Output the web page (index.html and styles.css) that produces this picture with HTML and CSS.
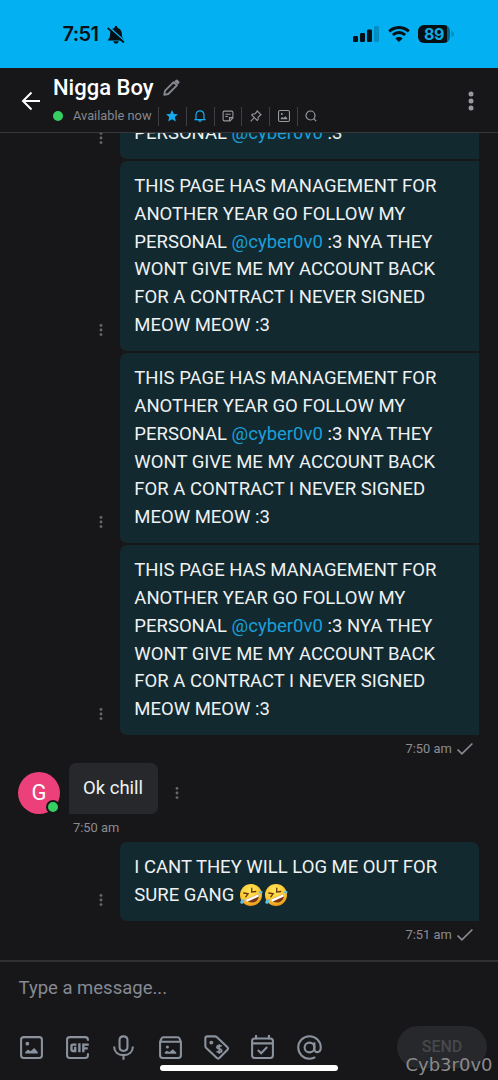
FILE: index.html
```html
<!DOCTYPE html>
<html lang="en">
<head>
<meta charset="utf-8">
<title>Chat</title>
<link rel="stylesheet" href="styles.css">
</head>
<body>
<svg class="defs" aria-hidden="true">
  <symbol id="dots" viewBox="0 0 6 14"><circle cx="3" cy="2.4" r="1.450"/><circle cx="3" cy="7" r="1.450"/><circle cx="3" cy="11.600" r="1.450"/></symbol>
  <symbol id="check" viewBox="0 0 18 14"><path d="M1.500 7.500l4.400 4.400L16.400 1.500" fill="none" stroke="currentColor" stroke-width="1.700"/></symbol>
  <symbol id="picture" viewBox="0 0 24 24"><rect x="2" y="2" width="20" height="20" rx="2.600" fill="none" stroke="currentColor" stroke-width="2"/><circle cx="8" cy="8.300" r="1.800"/><path d="M6 17.800v-1.500l2.600-2.300 2.500 1.700 3.500-3.300 3.400 3.900v1.500z"/></symbol>
  <radialGradient id="face" cx=".45" cy=".3" r=".75"><stop offset="0" stop-color="#ffe75a"/><stop offset=".65" stop-color="#fdc62e"/><stop offset="1" stop-color="#e28a16"/></radialGradient>
  <symbol id="rofl" viewBox="0 0 24 24">
    <circle cx="12" cy="12" r="11" fill="url(#face)"/>
    <path d="M6.600 16.800L19.600 11c1 3.300-.6 6.600-3.600 7.900-3.500 1.500-7.400.5-9.400-2.100z" fill="#7a3512"/>
    <path d="M6.600 16.800L19.600 11l.2 2.400-11.600 5.400z" fill="#fff"/>
    <path d="M4.800 10l4.300.8-2.300 3M12.800 5.200l-.2 3.900 4.100-.6" fill="none" stroke="#67320f" stroke-width="1.300" stroke-linecap="round"/>
    <path d="M5.900 16.400c-2.300-.4-4.700.9-4.600 2.800.1 2 2.700 2 3.500.5.500-1 .3-2.100 1.100-3.300zM19.300 9.800c.8-1.700 3.600-2.300 4.200-1 .5 1.300-1.100 2.300-4.200 1z" fill="#62bfe6"/>
  </symbol>
</svg>
<div class="screen">
  <div class="statusbar">
    <div class="clock">
      <span class="clock-time">7:51</span>
      <svg class="muted" viewBox="0 0 18 19"><path d="M.8 15.500c0-1.500 2.200-2 2.200-5.500 0-3.900 1.600-6.300 4.400-7C7.600 1.700 8.100.7 9 .7s1.400 1 1.600 2.300c2.800.7 4.400 3.100 4.400 7 0 3.500 2.200 4 2.200 5.500zM6.300 16.300h5.400c-.3 1.500-1.400 2.300-2.700 2.300s-2.400-.8-2.700-2.300z"/><path d="M1.500 1.600l16 14.400" stroke="#03b0f2" stroke-width="1.500"/><path d="M.6 2.800l16.300 14.700" stroke="#061015" stroke-width="1.700"/></svg>
    </div>
    <div class="signals">
      <svg class="cell" viewBox="0 0 26 16"><rect x="0" y="10" width="5" height="6" rx="1.300"/><rect x="7" y="7" width="5" height="9" rx="1.300"/><rect x="14" y="3.500" width="5" height="12.500" rx="1.300"/><rect x="21" y="0" width="5" height="16" rx="1.300" opacity=".22"/></svg>
      <svg class="wifi" viewBox="0 0 22 16"><path d="M1.200 5.400C6.700.1 15.300.1 20.800 5.400M4.900 9c3.400-3.300 8.800-3.300 12.200 0" fill="none" stroke="#061015" stroke-width="2.900"/><path d="M11 16l-3.600-3.500c2-1.900 5.200-1.900 7.200 0z"/></svg>
      <div class="battery"><span class="battery-level">89</span><i class="battery-tip"></i></div>
    </div>
  </div>
  <header class="header">
    <svg class="back" viewBox="0 0 20 20"><path d="M19 10H2M10.500 1.500L2 10l8.500 8.500" fill="none" stroke="#fff" stroke-width="2"/></svg>
    <div class="contact">
      <div class="name-row">
        <h1 class="name">Nigga Boy</h1>
        <svg class="pencil" viewBox="0 0 17 17"><path d="M1.200 15.800l.9-4.100L10.600 3.100l3.300 3.300L5.300 15z" fill="none" stroke="currentColor" stroke-width="1.800" stroke-linejoin="round"/><path d="M11.300 2.400L12.700 1c.7-.7 1.400-.7 2.100 0l1.200 1.200c.7.700.7 1.400 0 2.100l-1.400 1.400z"/></svg>
      </div>
      <div class="tools">
        <i class="online"></i>
        <span class="availability">Available now</span>
        <span class="tool active"><svg viewBox="0 0 12 12"><path d="M6 .1l1.800 3.800 4.200.4-3.200 2.800 1 4.300L6 9.200l-3.800 2.200 1-4.300L0 4.300l4.200-.4z"/></svg></span>
        <span class="tool active"><svg viewBox="0 0 12 12"><path d="M.4 9.700h11.200M2 9.500V5.300c0-2.900 1.600-4.500 4-4.500s4 1.600 4 4.500v4.200M4.500 10c.3 1.700 2.700 1.700 3 0" fill="none" stroke="currentColor" stroke-width="1.200"/></svg></span>
        <span class="tool"><svg viewBox="0 0 12 12"><path d="M2.400 1.100h7.200c.9 0 1.300.4 1.300 1.300V8L8 10.900H2.400c-.9 0-1.300-.4-1.300-1.300V2.400c0-.9.400-1.300 1.300-1.300zM3.300 4.200h5.400M3.300 6.500h2.800M7.500 10.500V7.600h3" fill="none" stroke="currentColor" stroke-width="1.100"/></svg></span>
        <span class="tool"><svg viewBox="0 0 12 12"><path d="M7.200.9l3.900 3.900-1 .5-2 2.100v2.200l-.9.800L1.700 4.900l.9-.9h2.200l2-2zM4.300 7.700L.7 11.300" fill="none" stroke="currentColor" stroke-width="1.100"/></svg></span>
        <span class="tool"><svg viewBox="1 1 22 22"><use href="#picture" width="24" height="24"/></svg></span>
        <span class="tool"><svg viewBox="0 0 12 12"><path d="M8.700 8.700l2.500 2.500" stroke="currentColor" stroke-width="1.200"/><circle cx="5.500" cy="5.500" r="4.500" fill="none" stroke="currentColor" stroke-width="1.200"/></svg></span>
      </div>
    </div>
    <svg class="menu" viewBox="0 0 6 20"><circle cx="3" cy="3" r="2.500"/><circle cx="3" cy="10" r="2.500"/><circle cx="3" cy="17" r="2.500"/></svg>
  </header>
  <main class="thread">
    <div class="row sent"><svg class="more"><use href="#dots"/></svg><div class="bubble">PERSONAL <a class="mention">@cyber0v0</a> :3</div></div>
    <div class="row sent"><svg class="more"><use href="#dots"/></svg><div class="bubble">THIS PAGE HAS MANAGEMENT FOR<br>ANOTHER YEAR GO FOLLOW MY<br>PERSONAL <a class="mention">@cyber0v0</a> :3 NYA THEY<br>WONT GIVE ME MY ACCOUNT BACK<br>FOR A CONTRACT I NEVER SIGNED<br>MEOW MEOW :3</div></div>
    <div class="row sent"><svg class="more"><use href="#dots"/></svg><div class="bubble">THIS PAGE HAS MANAGEMENT FOR<br>ANOTHER YEAR GO FOLLOW MY<br>PERSONAL <a class="mention">@cyber0v0</a> :3 NYA THEY<br>WONT GIVE ME MY ACCOUNT BACK<br>FOR A CONTRACT I NEVER SIGNED<br>MEOW MEOW :3</div></div>
    <div class="row sent"><svg class="more"><use href="#dots"/></svg><div class="bubble">THIS PAGE HAS MANAGEMENT FOR<br>ANOTHER YEAR GO FOLLOW MY<br>PERSONAL <a class="mention">@cyber0v0</a> :3 NYA THEY<br>WONT GIVE ME MY ACCOUNT BACK<br>FOR A CONTRACT I NEVER SIGNED<br>MEOW MEOW :3</div></div>
    <div class="meta meta-sent">7:50 am<svg class="check"><use href="#check"/></svg></div>
    <div class="row received"><div class="avatar">G<i class="presence"></i></div><div class="bubble bubble-in">Ok chill</div><svg class="more"><use href="#dots"/></svg></div>
    <div class="meta meta-received">7:50 am</div>
    <div class="row sent"><svg class="more"><use href="#dots"/></svg><div class="bubble last">I CANT THEY WILL LOG ME OUT FOR<br>SURE GANG <svg class="emoji"><use href="#rofl"/></svg><svg class="emoji"><use href="#rofl"/></svg></div></div>
    <div class="meta meta-sent">7:51 am<svg class="check"><use href="#check"/></svg></div>
  </main>
  <footer class="composer">
    <div class="placeholder">Type a message...</div>
    <div class="actions">
      <svg class="action" viewBox="0 0 24 24"><use href="#picture"/></svg>
      <svg class="action" viewBox="0 0 24 24"><path d="M22 5.500V4.600C22 3 21 2 19.400 2H4.600C3 2 2 3 2 4.600v14.800C2 21 3 22 4.600 22h14.800c1.600 0 2.600-1 2.600-2.600v-2" fill="none" stroke="currentColor" stroke-width="2"/><path d="M11 9.200H7.400c-.8 0-1.200.4-1.200 1.200v3.700c0 .8.400 1.200 1.200 1.200h2.400v-2.900H8.700M13.800 8v8.500M17.600 16.500V9.200h5.200M17.600 12.800h4.200" fill="none" stroke="currentColor" stroke-width="2.300"/></svg>
      <svg class="action" viewBox="0 0 24 24"><path d="M12 1.300c2.200 0 3.800 1.500 3.800 3.700v6.500c0 2.200-1.600 3.700-3.800 3.700s-3.800-1.500-3.800-3.700V5c0-2.200 1.600-3.700 3.800-3.700zM3 11c0 5 3.500 8.300 9 8.300s9-3.300 9-8.300M12 19v4.700" fill="none" stroke="currentColor" stroke-width="2"/></svg>
      <svg class="action" viewBox="0 0 24 24"><path d="M2 6.500h20v12.900c0 1.600-1 2.600-2.600 2.600H4.600C3 22 2 21 2 19.400zM2 6.500l1.300-3c.4-.9 1-1.300 2-1.300h13.400c1 0 1.600.4 2 1.300l1.300 3" fill="none" stroke="currentColor" stroke-width="2" stroke-linejoin="round"/><circle cx="9" cy="11.500" r="1.500"/><path d="M6.500 18v-1.500l2-1.500 2.500 1.400 3.300-2.800 3.200 3.100V18z"/></svg>
      <svg class="action" viewBox="0 0 24 24"><path d="M1.300 3.300c0-1.300.7-2 2-2h7.200c.8 0 1.400.3 2 .8l9.800 9.500c.9.900.9 2 0 2.900l-7.300 7.400c-.9.900-2 .9-2.900 0L2.200 12.500c-.6-.6-.9-1.200-.9-2z" fill="none" stroke="currentColor" stroke-width="2"/><circle cx="7" cy="7.300" r="1.900"/><path d="M17 10.800c-1.400-1.100-4.700-.9-4.700 1 0 2.100 4.700 1 4.700 3.200 0 1.900-3.500 2-4.900.7M14.600 8.800v9.200" fill="none" stroke="currentColor" stroke-width="1.700"/></svg>
      <svg class="action" viewBox="0 0 24 24"><rect x="2" y="3.300" width="20" height="18.700" rx="2.500" fill="none" stroke="currentColor" stroke-width="2"/><path d="M2 8h20M5.800 0v4M18.200 0v4M7.500 14.300l3.200 3.200 5.800-6" fill="none" stroke="currentColor" stroke-width="2"/></svg>
      <svg class="action" viewBox="0 0 24 24"><circle cx="12" cy="12" r="4.700" fill="none" stroke="currentColor" stroke-width="2"/><path d="M16.700 7v6.500c0 4.300 6.100 4 6.100-1.500C22.800 5.800 18 1.200 12 1.200S1.200 6 1.200 12 6 22.800 12 22.800c2 0 4-.5 5.500-1.500" fill="none" stroke="currentColor" stroke-width="2"/></svg>
      <button class="send" type="button">SEND</button>
    </div>
  </footer>
  <div class="home-indicator"></div>
  <div class="watermark">Cyb3r0v0</div>
</div>
</body>
</html>
```
FILE: styles.css
```css
* { box-sizing: border-box; }
body { margin: 0; background: #17171a; font-family: Roboto, "Liberation Sans", sans-serif; }
svg { display: block; fill: currentColor; flex: none; }
i { display: block; }
.defs { position: absolute; width: 0; height: 0; }
.screen { position: relative; width: 498px; height: 1080px; display: flex; flex-direction: column; overflow: hidden; background: #17171a; }

.statusbar { flex: none; height: 68px; display: flex; justify-content: space-between; align-items: center; padding: 0 44px 0 62.500px; background: #03b0f2; color: #061015; }
.clock { display: flex; align-items: center; gap: 4px; }
.clock-time { width: 40px; white-space: nowrap; font: 600 20px/24px Inter, sans-serif; letter-spacing: -.6px; }
.muted { width: 18px; height: 19px; }
.signals { display: flex; align-items: center; }
.cell { width: 26px; height: 16px; }
.wifi { width: 22px; height: 16px; margin: 0 8px 0 9px; }
.battery { display: flex; align-items: center; gap: 1px; }
.battery-level { width: 32px; height: 18px; border-radius: 6px; background: linear-gradient(90deg, #061015 90%, #056486 90%); color: #12acdf; font: 700 16px/18px Inter, sans-serif; letter-spacing: -.3px; text-align: center; }
.battery-tip { width: 3px; height: 6px; border-radius: 0 3px 3px 0; background: #058fc0; }

.header { flex: none; height: 65px; display: flex; align-items: flex-start; padding: 0 24px 0 21px; border-bottom: 1px solid #38393c; }
.back { width: 20px; height: 20px; margin-top: 23px; }
.contact { flex: 1; padding: 5px 0 0 12px; }
.name-row { display: flex; align-items: center; gap: 9.500px; height: 29px; }
.name { margin: 0; font-size: 22px; line-height: 29px; font-weight: 500; color: #fff; white-space: nowrap; }
.pencil { width: 17px; height: 17px; color: #85888e; }
.tools { display: flex; align-items: center; height: 20px; margin-top: 4px; color: #96999f; }
.online { width: 10px; height: 10px; border-radius: 50%; background: #36cf63; }
.availability { width: 85px; margin-left: 10px; font-size: 12.800px; line-height: 18px; color: #85888e; white-space: nowrap; }
.tool { width: 27.800px; height: 19px; display: flex; align-items: center; justify-content: center; border-left: 1px solid #3d3f43; }
.tool svg { width: 12px; height: 12px; }
.tool.active { color: #12acef; }
.menu { width: 6px; height: 20px; margin-top: 23px; color: #9699a0; }

.thread { flex: 1; min-height: 0; display: flex; flex-direction: column; justify-content: flex-end; overflow: hidden; padding: 0 18.700px 18.300px 18px; }
.row { flex: none; display: flex; }
.sent { justify-content: flex-end; align-items: flex-end; gap: 16px; margin-top: 2.300px; }
.more { width: 6px; height: 14px; color: #66686b; }
.sent .more { margin-bottom: 14px; }
.bubble { width: 359px; padding: 12px 14px 11px; border-radius: 7px 0 0 7px; background: #132930; color: #eef2f3; font-size: 18.500px; line-height: 27.800px; white-space: nowrap; }
.last { border-top-right-radius: 7px; }
.mention { color: #1a9fd8; }
.meta { flex: none; display: flex; align-items: center; height: 14px; color: #8a8c92; font-size: 12.900px; line-height: 14px; }
.meta-sent { justify-content: flex-end; gap: 4.500px; margin-top: 7px; padding-right: 5px; }
.check { width: 18px; height: 14px; }
.received { align-items: flex-end; margin-top: 7px; }
.received .more { margin: 0 0 14px 16px; }
.avatar { position: relative; width: 42px; height: 42px; margin-right: 9px; border-radius: 50%; background: #ec407a; color: #fff; font-size: 22px; line-height: 42px; text-align: center; }
.presence { position: absolute; right: 0; bottom: 0; width: 14px; height: 14px; border: 2px solid #17171a; border-radius: 50%; background: #36cf63; }
.bubble-in { width: 88.500px; background: #27282b; border-radius: 7px 7px 7px 0; }
.meta-received { margin: 7px 0 5px; padding-left: 55px; }
.emoji { display: inline-block; width: 24px; height: 24px; margin-left: .6px; vertical-align: -6px; }

.composer { flex: none; height: 120px; padding: 13px 11px 0 18.500px; border-top: 2px solid #303134; }
.placeholder { font-size: 18.500px; line-height: 26px; color: #858a93; }
.actions { display: flex; align-items: center; gap: 21.400px; height: 42px; margin-top: 25px; color: #8a929e; }
.action { width: 25px; height: 25px; }
.send { width: 90px; height: 42px; margin-left: auto; padding: 0; border: 0; border-radius: 21px; background: #27282b; color: #46484c; font: 500 16px/38px Roboto, sans-serif; }
.home-indicator { position: absolute; left: 160px; top: 1065px; width: 178px; height: 6px; border-radius: 3px; background: #fff; }
.watermark { position: absolute; right: 5.500px; top: 1054px; color: #8a8a8b; font: 18px/22px "DejaVu Sans", sans-serif; }
```
